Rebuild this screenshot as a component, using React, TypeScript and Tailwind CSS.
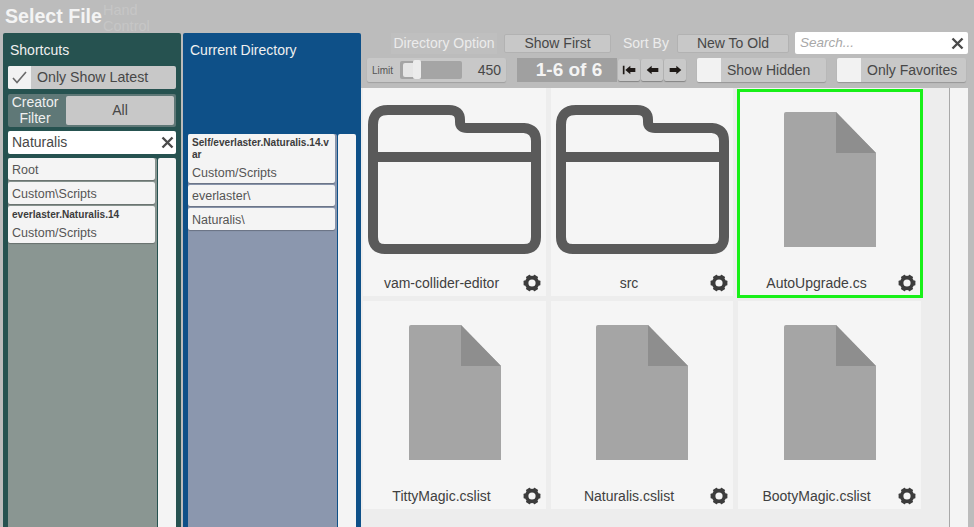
const sans = "font-['Liberation_Sans',Arial,sans-serif]";

function Gear() {
    return (
        <svg className="w-[18px] h-[18px] shrink-0" viewBox="0 0 18 18">
            <circle cx="9" cy="9" r="5.4" fill="none" stroke="#3c3c3c" strokeWidth="3.6" />
            {[30, 90, 150, 210, 270, 330].map(a => (
                <rect key={a} x="6.6" y="0.6" width="4.8" height="3.6" rx="0.6" fill="#3c3c3c" transform={`rotate(${a} 9 9)`} />
            ))}
        </svg>
    );
}

function Cross() {
    return (
        <svg className="w-[13px] h-[13px] shrink-0" viewBox="0 0 13 13">
            <path d="M1.5 1.5l10 10M11.5 1.5l-10 10" stroke="#4a4a4a" strokeWidth="2.4" fill="none" />
        </svg>
    );
}

function FolderIcon() {
    return (
        <svg className="w-[175px] h-[151px] blur-[0.5px]" viewBox="0 0 175 151">
            <path
                d="M6 22 Q6 7 21 7 H82 Q93 7 93 17 V19 Q93 25 100 25 H157 Q169 26 169 38 V134 Q169 146 157 146 H18 Q6 146 6 134 Z M6 54 H169"
                fill="none"
                stroke="#5a5a5a"
                strokeWidth="10"
                strokeLinejoin="round"
            />
        </svg>
    );
}

function FileIcon() {
    return (
        <svg className="w-[92px] h-[135px] blur-[0.5px]" viewBox="0 0 92 135">
            <path d="M2 0 H52 L92 41 V135 H0 V2 Q0 0 2 0 Z" fill="#a5a5a5" />
            <path d="M52 0 L92 41 H52 Z" fill="#8e8e8e" />
        </svg>
    );
}

function Tile({ name, folder, selected }: { name: string; folder?: boolean; selected?: boolean }) {
    return (
        <div className="relative h-[208px] bg-[#f5f5f5] flex flex-col items-center">
            <div className={folder ? 'mt-[15px]' : 'mt-[24px]'}>
                {folder ? <FolderIcon /> : <FileIcon />}
            </div>
            <div className="absolute bottom-[4px] left-0 right-0 flex items-center h-[18px]">
                <span className="flex-1 pr-[3px] text-center text-[14px] text-[#404040] whitespace-nowrap">{name}</span>
                <span className="mr-[5px]"><Gear /></span>
            </div>
            {selected && <div className="absolute -left-[1px] -right-[2px] top-[1px] -bottom-[2px] border-[3px] border-[#18f018]" />}
        </div>
    );
}

function Row({ bold, text, h }: { bold?: string; text: string; h: string }) {
    return (
        <div className={`${h} mr-[2px] bg-[#f4f4f4] rounded-[2px] px-[4px] pt-[1px] flex flex-col justify-center shadow-[0_1px_1px_rgba(0,0,0,0.25)]`}>
            {bold && <div className="text-[10.1px] leading-[12px] font-bold text-[#3c3c3c] break-all mb-[4px]">{bold}</div>}
            <div className="text-[12.5px] leading-[16px] text-[#555]">{text}</div>
        </div>
    );
}

function Toggle({ label, w }: { label: string; w: string }) {
    return (
        <div className={`${w} h-[24px] bg-[#c8c8c8] rounded-[2px] flex items-center shadow-[0_1px_1px_rgba(0,0,0,0.2)]`}>
            <div className="w-[24px] h-full bg-[#f2f2f2] rounded-l-[2px]" />
            <span className="pl-[6px] pt-[1px] text-[14px] text-[#474747] whitespace-nowrap">{label}</span>
        </div>
    );
}

function NavButton({ d }: { d: string }) {
    return (
        <div className="w-[22px] h-[22px] bg-[#c9c9c9] rounded-[2px] flex items-center justify-center shadow-[0_1px_1px_rgba(0,0,0,0.3)]">
            <svg className="w-[15px] h-[10px]" viewBox="0 0 16 12">
                <path d={d} fill="#1f1a17" />
            </svg>
        </div>
    );
}

export default function App() {
    return (
        <div className={`${sans} relative w-[974px] h-[527px] overflow-hidden bg-[#bcbcbc] flex flex-col`}>
            {/* Header */}
            <div className="h-[33px] shrink-0 pl-[5px] pt-[4px]">
                <div className="text-[19.6px] leading-[24px] font-bold text-[#f4f4f4]">Select File</div>
            </div>
            <div className="absolute left-[103px] top-[2px] text-[14.5px] leading-[16px] text-[#c6c6c6]">
                Hand<br />Control
            </div>

            <div className="flex-1 flex min-h-0">
                {/* Shortcuts */}
                <div className="ml-[3px] w-[178px] bg-[#265250] rounded-t-[2px] px-[5px] flex flex-col">
                    <div className="h-[33px] pl-[2px] pt-[1px] flex items-center text-[14px] text-[#f0f0f0]">Shortcuts</div>
                    <div className="h-[23px] bg-[#c8c8c8] rounded-[2px] flex items-center">
                        <div className="w-[23px] h-full bg-[#f2f2f2] rounded-l-[2px] flex items-center justify-center">
                            <svg className="w-[15px] h-[13px]" viewBox="0 0 15 13">
                                <path d="M1 7l4 4.5L14 1" fill="none" stroke="#6a6a6a" strokeWidth="1.6" />
                            </svg>
                        </div>
                        <span className="pl-[6px] pt-[1px] text-[14.2px] text-[#474747]">Only Show Latest</span>
                    </div>
                    <div className="mt-[5px] h-[33px] bg-[#5f7877] rounded-[2px] flex items-center pr-[2px]">
                        <div className="w-[54px] -mt-[2px] text-center text-[14px] leading-[16px] text-[#f0f0f0]">Creator Filter</div>
                        <div className="ml-[4px] flex-1 h-[29px] bg-[#c8c8c8] rounded-[2px] flex items-center justify-center text-[14px] text-[#474747]">All</div>
                    </div>
                    <div className="mt-[4px] h-[23px] bg-white rounded-[2px] flex items-center justify-between pl-[4px] pr-[2px]">
                        <span className="text-[14px] text-[#474747]">Naturalis</span>
                        <Cross />
                    </div>
                    <div className="mt-[4px] flex-1 flex gap-[1px] min-h-0">
                        <div className="w-[149px] bg-[#8a9692] rounded-t-[2px] flex flex-col gap-[2px]">
                            <Row text="Root" h="h-[22px]" />
                            <Row text="Custom\Scripts" h="h-[22px]" />
                            <Row bold="everlaster.Naturalis.14" text="Custom/Scripts" h="h-[37px]" />
                        </div>
                        <div className="flex-1 bg-[#f4f4f4] rounded-t-[2px]" />
                    </div>
                </div>

                {/* Current Directory */}
                <div className="ml-[2px] w-[178px] bg-[#0e5088] rounded-t-[2px] px-[5px] flex flex-col">
                    <div className="h-[33px] pl-[2px] pt-[1px] flex items-center text-[14px] text-[#f0f0f0]">Current Directory</div>
                    <div className="mt-[68px] flex-1 flex gap-[1px] min-h-0">
                        <div className="w-[149px] bg-[#8b97ae] rounded-t-[2px] flex flex-col gap-[2px]">
                            <Row bold="Self/everlaster.Naturalis.14.var" text="Custom/Scripts" h="h-[49px]" />
                            <Row text="everlaster\" h="h-[21px]" />
                            <Row text="Naturalis\" h="h-[22px]" />
                        </div>
                        <div className="flex-1 bg-[#f4f4f4] rounded-t-[2px]" />
                    </div>
                </div>

                {/* File browser */}
                <div className="flex-1 flex flex-col min-w-0">
                    <div className="h-[55px] shrink-0">
                        <div className="flex items-center h-[22px] -mt-[1px]">
                            <span className="ml-[30px] w-[106px] bg-[#bfbfbf] text-center text-[14px] text-[#ececec] whitespace-nowrap">Directory Option</span>
                            <div className="ml-[7px] w-[107px] h-[19px] bg-[#c8c8c8] rounded-[2px] border border-[#b2b2b2] flex items-center justify-center text-[14px] text-[#474747]">Show First</div>
                            <span className="ml-[12px] w-[48px] text-[14px] text-[#ececec] whitespace-nowrap">Sort By</span>
                            <div className="ml-[6px] w-[112px] h-[19px] bg-[#c8c8c8] rounded-[2px] border border-[#b2b2b2] flex items-center justify-center text-[14px] text-[#474747]">New To Old</div>
                            <div className="ml-[6px] w-[173px] h-[22px] bg-white rounded-[2px] flex items-center justify-between pl-[5px] pr-[4px]">
                                <span className="text-[13.5px] italic text-[#a8a8a8]">Search...</span>
                                <Cross />
                            </div>
                        </div>
                        <div className="flex items-center h-[24px] mt-[4px]">
                            <div className="ml-[6px] w-[139px] h-[24px] bg-[#c8c8c8] rounded-[2px] flex items-center pl-[5px] pr-[5px] shadow-[0_1px_1px_rgba(0,0,0,0.15)]">
                                <span className="w-[28px] text-[10px] text-[#555]">Limit</span>
                                <div className="relative w-[62px] h-[18px] bg-[#a5a5a5] rounded-[2px]">
                                    <div className="absolute left-[3px] top-[2px] w-[11px] h-[14px] bg-[#e6e6e6] rounded-l-[2px]" />
                                    <div className="absolute left-[13px] -top-[1px] w-[8px] h-[19px] bg-[#ececec] rounded-[2px]" />
                                </div>
                                <span className="flex-1 pt-[1px] text-right text-[14px] text-[#474747]">450</span>
                            </div>
                            <div className="ml-[11px] w-[100px] h-[24px] pl-[4px] bg-[#a0a0a0] flex items-center justify-center text-[19px] font-bold text-[#f4f4f4] whitespace-nowrap">1-6 of 6</div>
                            <div className="ml-[1px] flex gap-[1px] w-[68px]">
                                <NavButton d="M0 1h2v10H0zM3 6l6-5v2.5h6v5H9V11z" />
                                <NavButton d="M1 6l6-5v2.5h8v5H7V11z" />
                                <NavButton d="M15 6L9 1v2.5H1v5h8V11z" />
                            </div>
                            <div className="ml-[11px]"><Toggle label="Show Hidden" w="w-[129px]" /></div>
                            <div className="ml-[11px]"><Toggle label="Only Favorites" w="w-[129px]" /></div>
                        </div>
                    </div>

                    <div className="flex-1 flex min-h-0">
                        <div className="w-[588px] bg-[#ededed] pl-[2px] grid grid-cols-[183px_182px_183px] gap-[5px] content-start">
                            <Tile name="vam-collider-editor" folder />
                            <Tile name="src" folder />
                            <Tile name="AutoUpgrade.cs" selected />
                            <Tile name="TittyMagic.cslist" />
                            <Tile name="Naturalis.cslist" />
                            <Tile name="BootyMagic.cslist" />
                        </div>
                        <div className="w-[19px] bg-[#f4f4f4] border-l border-[#a8a8a8]" />
                    </div>
                </div>
            </div>
        </div>
    );
}
